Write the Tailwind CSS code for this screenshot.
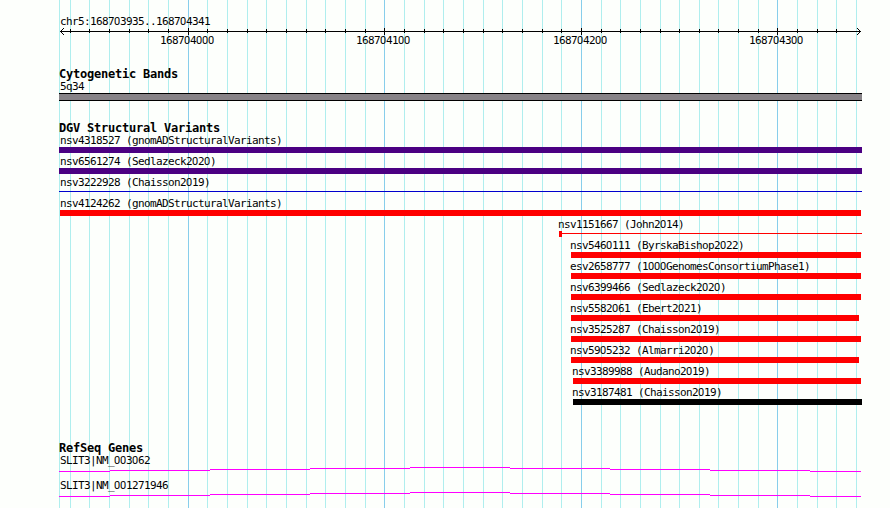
<!DOCTYPE html>
<html lang="en">
<head>
<meta charset="utf-8">
<title>chr5:168703935..168704341</title>
<script src="https://cdn.jsdelivr.net/npm/@tailwindcss/browser@4"></script>
</head>
<body class="bg-[#fdfffc]">
<main class="relative w-[890px] h-[508px] overflow-hidden text-black font-['DejaVu_Sans_Mono',monospace] text-[11px] leading-[13px] tracking-[-0.62px] whitespace-nowrap">
  <svg class="absolute inset-0" width="890" height="508" shape-rendering="crispEdges"><path id="minor" stroke="#afeeee" fill="none"/><path id="major" stroke="#87ceeb" fill="none"/></svg>
  <div class="relative flex flex-col pl-[59px] pt-[15px]">
    <header class="h-[53px]">
      <div class="pl-px h-[12px] t">chr5:168703935..168704341</div>
      <svg class="block" width="804" height="8" shape-rendering="crispEdges"><path id="ticks" stroke="#000" fill="none"/><path fill="#000" d="M1 4h801v1H1zM2 3h1v1h-1zM3 2h1v1h-1zM4 1h1v1h-1zM2 5h1v1h-1zM3 6h1v1h-1zM4 7h1v1h-1zM800 3h1v1h-1zM799 2h1v1h-1zM798 1h1v1h-1zM800 5h1v1h-1zM799 6h1v1h-1zM798 7h1v1h-1z"/></svg>
      <div class="flex gap-x-[143px] pl-[101px] -mt-px">
        <span class="w-[53px] t">168704000</span><span class="w-[54px] t">168704100</span><span class="w-[53px] t">168704200</span><span class="w-[54px] t">168704300</span>
      </div>
    </header>
    <section class="h-[54px]">
      <h2 class="font-bold text-[12px] tracking-[-0.22px] leading-[13px] h-[12px]">Cytogenetic Bands</h2>
      <div class="pl-px h-[13px] t">5q34</div>
      <div class="w-[803px] h-[8px] border-y border-black bg-[#878387]"></div>
    </section>
    <section class="h-[320px]">
      <h2 class="font-bold text-[12px] tracking-[-0.22px] leading-[13px] h-[12px]">DGV Structural Variants</h2>
      <div id="variants"></div>
    </section>
    <section>
      <h2 class="font-bold text-[12px] tracking-[-0.22px] leading-[13px] h-[12px]">RefSeq Genes</h2>
      <div class="h-[25px]"><div class="pl-px h-[13px] t">SLIT3|NM_003062</div><svg class="block" width="803" height="5" shape-rendering="crispEdges"><path class="gene" fill="#f0f"/></svg></div>
      <div class="h-[25px]"><div class="pl-px h-[13px] t">SLIT3|NM_001271946</div><svg class="block" width="803" height="5" shape-rendering="crispEdges"><path class="gene" fill="#f0f"/></svg></div>
    </section>
  </div>
</main>
<script>
// Genomic grid positions in pixels
const minor=[59,70,89,109,129,148,168,207,227,247,266,286,306,325,345,365,404,424,443,463,483,502,522,542,561,601,620,640,660,679,699,718,738,758,797,817,836,856];
const major=[188,384,581,777];
const $=s=>document.querySelector(s);
$('#minor').setAttribute('d',minor.map(x=>`M${x+.5} 0V508`).join(''));
$('#major').setAttribute('d',major.map(x=>`M${x+.5} 0V508`).join(''));
$('#ticks').setAttribute('d',minor.slice(1,-1).map(x=>`M${x-58.5} 2v4`).join('')+major.map(x=>`M${x-58.5} 1v7`).join(''));
// label, label x, bar start, bar end, style
const rows=[
['nsv4318527 (gnomADStructuralVariants)',60,59,862,'bg-[#4b0082] h-[6px]'],
['nsv6561274 (Sedlazeck2020)',60,59,862,'bg-[#4b0082] h-[6px]'],
['nsv3222928 (Chaisson2019)',60,59,862,'bg-[#0000cd] h-px mt-[2px]'],
['nsv4124262 (gnomADStructuralVariants)',60,60,861,'bg-[#ff0000] h-[6px]'],
['nsv1151667 (John2014)',558,559,862,'insertion'],
['nsv5460111 (ByrskaBishop2022)',570,571,861,'bg-[#ff0000] h-[6px]'],
['esv2658777 (1000GenomesConsortiumPhase1)',570,571,861,'bg-[#ff0000] h-[6px]'],
['nsv6399466 (Sedlazeck2020)',570,571,861,'bg-[#ff0000] h-[6px]'],
['nsv5582061 (Ebert2021)',570,571,859,'bg-[#ff0000] h-[6px]'],
['nsv3525287 (Chaisson2019)',570,571,861,'bg-[#ff0000] h-[6px]'],
['nsv5905232 (Almarri2020)',570,571,859,'bg-[#ff0000] h-[6px]'],
['nsv3389988 (Audano2019)',572,573,861,'bg-[#ff0000] h-[6px]'],
['nsv3187481 (Chaisson2019)',572,573,862,'bg-black h-[6px]']];
$('#variants').innerHTML=rows.map(([n,lx,a,b,c])=>`<div class="h-[21px] flex flex-col"><div class="h-[13px] t" style="padding-left:${lx-59}px">${n}</div>`+
(c==='insertion'?`<div class="flex" style="margin-left:${a-59}px"><div class="w-[3px] h-[6px] bg-[#ff0000]"></div><div class="mt-[2px] h-px w-[300px] bg-[#ff0000]"></div></div>`
:`<div class="${c}" style="margin-left:${a-59}px;width:${b-a}px"></div>`)+'</div>').join('');
// Intron line rises and falls one pixel every 100 pixels
const d=[[0,51,4],[51,151,3],[151,251,2],[251,351,1],[351,451,0],[451,551,1],[551,651,2],[651,751,3],[751,802,4]].map(([a,b,y])=>`M${a} ${y}H${b}v1H${a}z`).join('');
document.querySelectorAll('.gene').forEach(p=>p.setAttribute('d',d));
// Undotted zeros
document.querySelectorAll('.t').forEach(e=>{e.innerHTML=e.textContent.replace(/0+/g,'<span class="font-[Roboto] tracking-[-0.18px]">$&</span>')});
</script>
</body>
</html>
